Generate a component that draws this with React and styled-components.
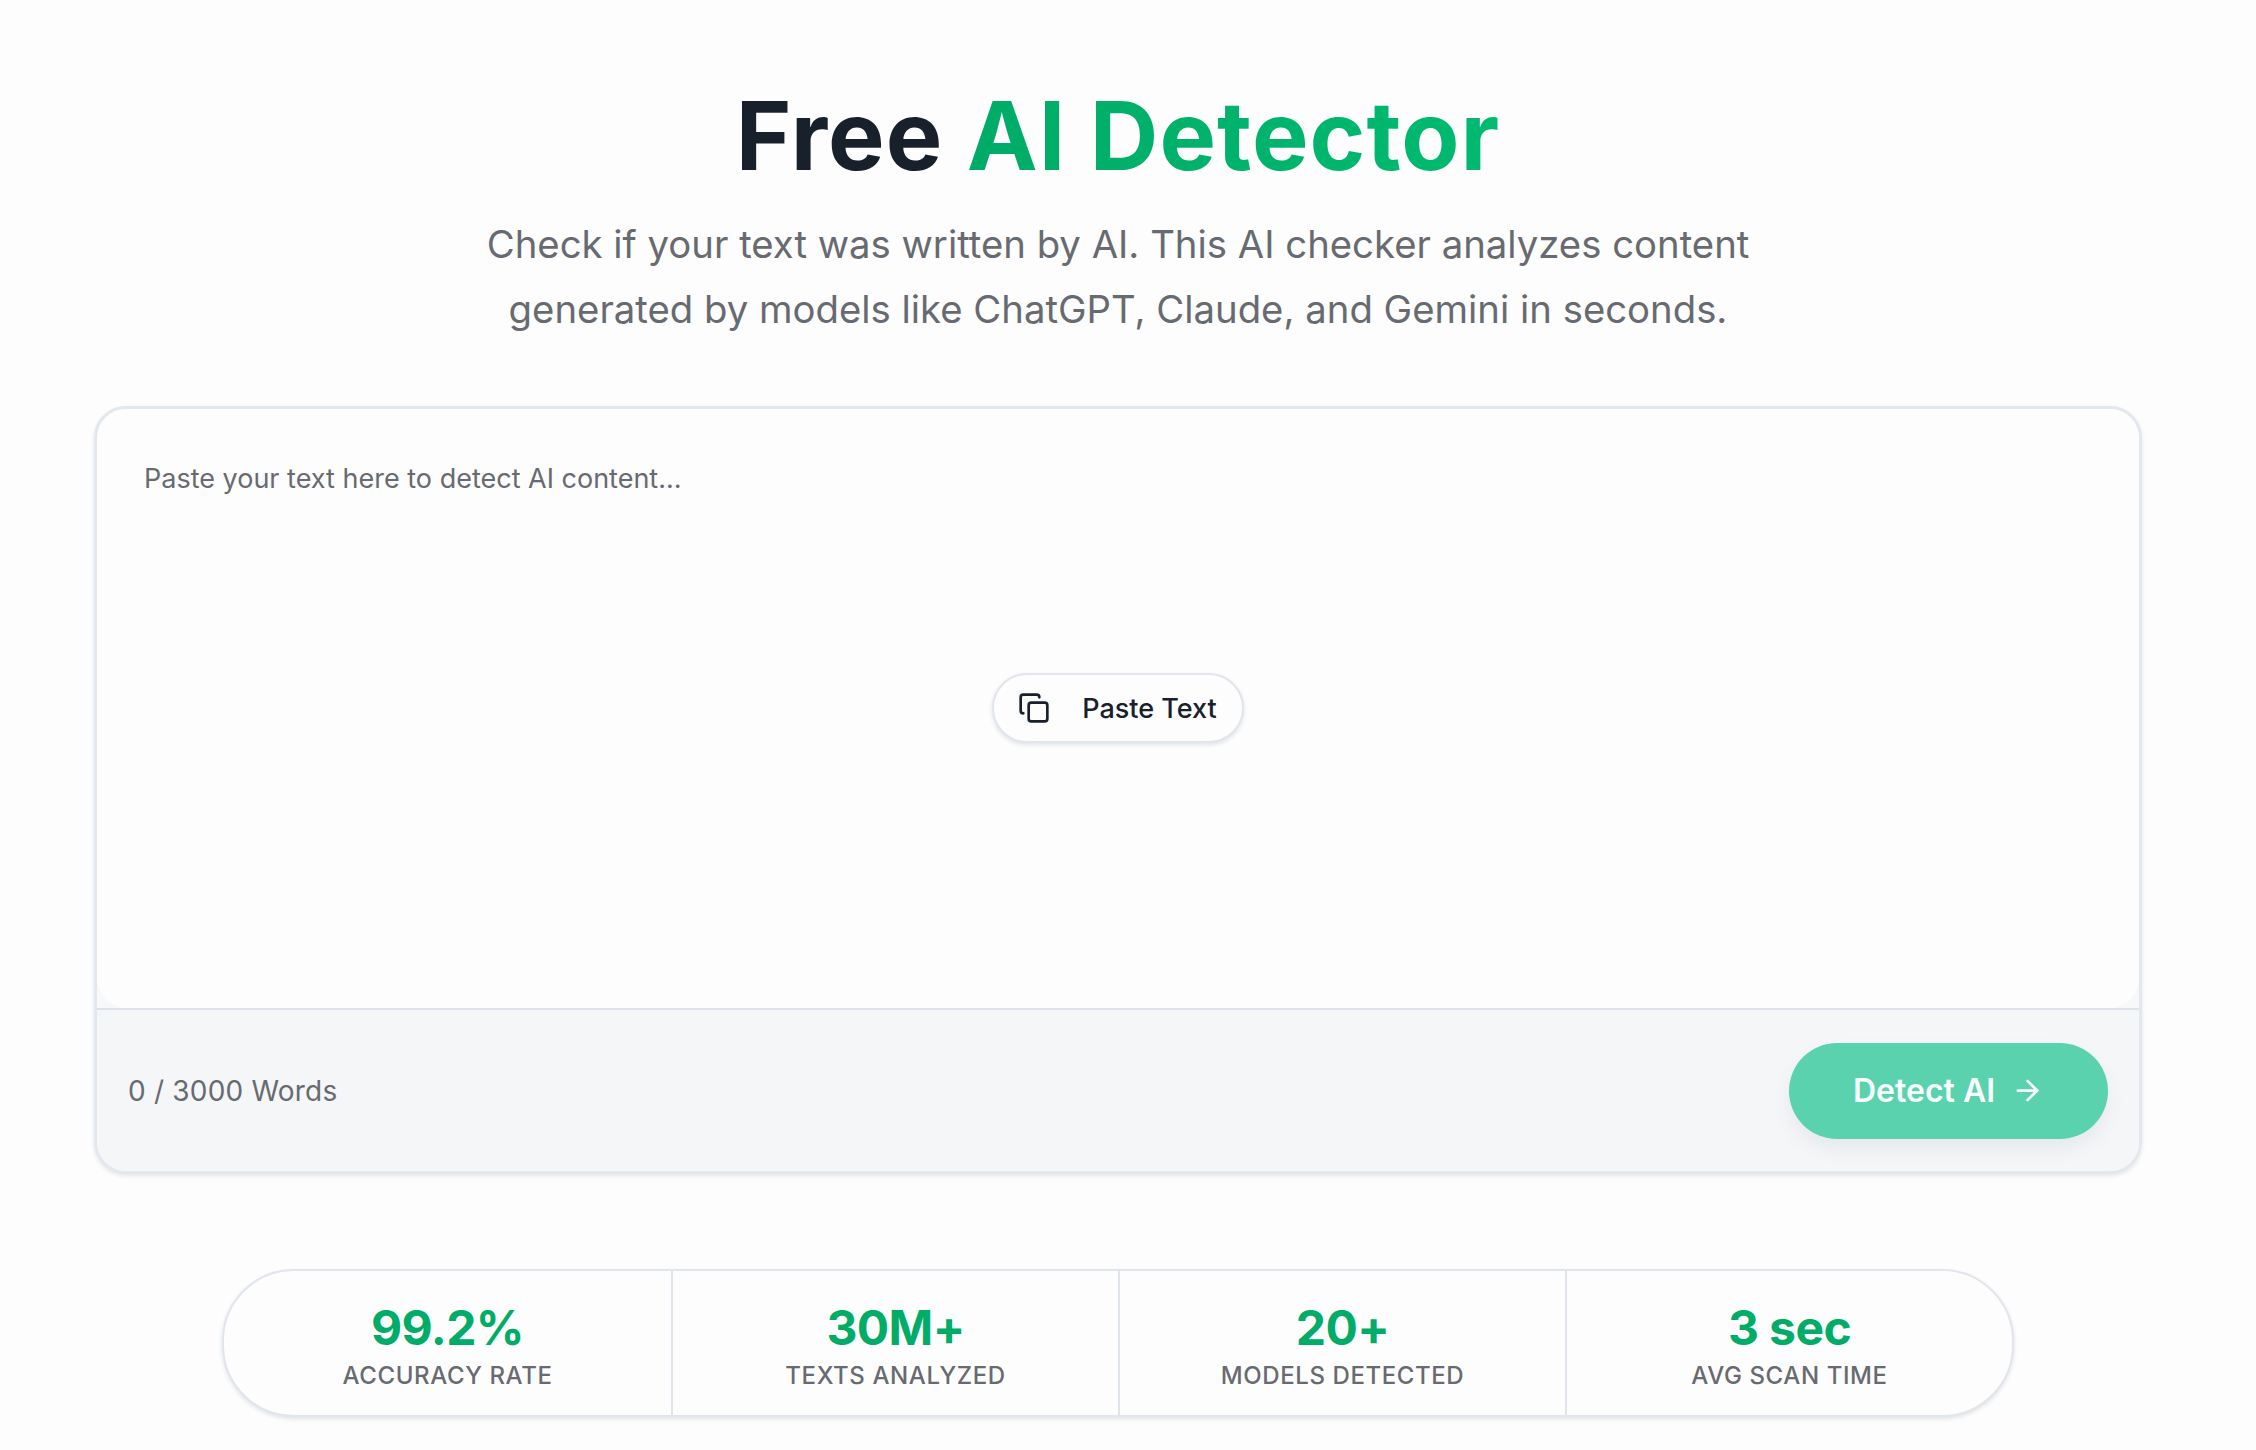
import React from 'react';
import styled, { createGlobalStyle } from 'styled-components';

const GlobalStyle = createGlobalStyle`
  html, body {
    margin: 0;
    padding: 0;
    background: #fdfdfd;
  }
  body {
    font-family: Inter, "Noto Sans", sans-serif;
    overflow: hidden;
  }
`;

const Page = styled.main`
  width: 2236px;
  height: 1450px;
  box-sizing: border-box;
  padding: 78px 94px 0;
  display: flex;
  flex-direction: column;
  align-items: center;
`;

const Title = styled.h1`
  margin: 0;
  font-size: 95px;
  line-height: 116px;
  font-weight: 700;
  letter-spacing: 1px;
  color: #18212b;
  text-align: center;
`;

const Accent = styled.span`
  color: #00b16a;
  background: linear-gradient(90deg, #00ab68, #00ba70);
  -webkit-background-clip: text;
  background-clip: text;
  -webkit-text-fill-color: transparent;
`;

const Subtitle = styled.p`
  margin: 18px 0 0;
  font-size: 38.3px;
  line-height: 65px;
  font-weight: 400;
  color: #676b71;
  text-align: center;
`;

const Card = styled.section`
  width: 100%;
  box-sizing: border-box;
  margin-top: 64px;
  border: 3px solid #e3e7ee;
  border-radius: 32px;
  background: #f7f8fa;
  box-shadow: 0 2px 4px rgba(20, 30, 50, 0.1);
  overflow: hidden;
`;

const InputArea = styled.div`
  height: 599px;
  box-sizing: border-box;
  padding: 50px 47px;
  background: #fdfdfd;
  border-radius: 0 0 30px 30px;
  display: flex;
  flex-direction: column;
  align-items: center;
`;

const Placeholder = styled.div`
  align-self: flex-start;
  font-size: 27px;
  line-height: 40px;
  color: #676b71;
`;

const PasteButton = styled.button`
  margin-top: 174px;
  height: 70px;
  box-sizing: border-box;
  padding: 0 25px 0 24px;
  display: flex;
  align-items: center;
  gap: 32px;
  font-family: inherit;
  font-size: 27px;
  font-weight: 500;
  color: #18212b;
  background: #fdfdfd;
  border: 2px solid #e1e5ec;
  border-radius: 35px;
  box-shadow: 0 2px 4px rgba(20, 30, 50, 0.12);
`;

const Footer = styled.div`
  height: 161px;
  padding: 0 31px;
  display: flex;
  align-items: center;
  justify-content: space-between;
  background: #f4f6f8;
  border-top: 2px solid #dde2ea;
`;

const WordCount = styled.span`
  font-size: 28px;
  letter-spacing: 0.2px;
  color: #676b71;
`;

const DetectButton = styled.button`
  width: 319px;
  height: 96px;
  display: flex;
  align-items: center;
  justify-content: center;
  gap: 16px;
  font-family: inherit;
  font-size: 32px;
  font-weight: 600;
  color: #f8fdfb;
  background: #5ad2ae;
  border: none;
  border-radius: 48px;
  box-shadow: 0 10px 20px rgba(20, 30, 50, 0.06);
`;

const StatsBar = styled.section`
  width: 1792px;
  box-sizing: border-box;
  margin-top: 95px;
  display: grid;
  grid-template-columns: repeat(4, 1fr);
  border: 2px solid #e1e5ec;
  border-radius: 72px;
  background: #fdfdfd;
  box-shadow: 0 2px 4px rgba(20, 30, 50, 0.12);
`;

const Stat = styled.div`
  height: 144px;
  box-sizing: border-box;
  padding-top: 6px;
  display: flex;
  flex-direction: column;
  align-items: center;
  justify-content: center;
  border-left: ${props => (props.$first ? 'none' : '2px solid #dfe4ec')};
`;

const StatValue = styled.div`
  font-size: 48px;
  line-height: 56px;
  font-weight: 700;
  letter-spacing: -0.6px;
  color: #00ac68;
`;

const StatLabel = styled.div`
  margin-top: 4px;
  font-size: 24px;
  line-height: 32px;
  font-weight: 500;
  letter-spacing: 0.6px;
  color: #676b71;
`;

const PasteIcon = () => (
  <svg width="32" height="32" viewBox="0 0 24 24" fill="none" stroke="#18212b" strokeWidth="2" strokeLinecap="round" strokeLinejoin="round">
    <rect x="8" y="8" width="14" height="14" rx="2" />
    <path d="M4 16c-1.1 0-2-.9-2-2V4c0-1.1.9-2 2-2h10c1.1 0 2 .9 2 2" />
  </svg>
);

const ArrowIcon = () => (
  <svg width="33" height="33" viewBox="0 0 24 24" fill="none" stroke="currentColor" strokeWidth="2" strokeLinecap="round" strokeLinejoin="round">
    <path d="M5 12h14" />
    <path d="m12 5 7 7-7 7" />
  </svg>
);

const stats = [
  { value: '99.2%', label: 'ACCURACY RATE' },
  { value: '30M+', label: 'TEXTS ANALYZED' },
  { value: '20+', label: 'MODELS DETECTED' },
  { value: '3 sec', label: 'AVG SCAN TIME' },
];

const App = () => (
  <Page>
    <GlobalStyle />
    <Title>
      Free <Accent>AI Detector</Accent>
    </Title>
    <Subtitle>
      Check if your text was written by AI. This AI checker analyzes content
      <br />
      generated by models like ChatGPT, Claude, and Gemini in seconds.
    </Subtitle>
    <Card>
      <InputArea>
        <Placeholder>Paste your text here to detect AI content...</Placeholder>
        <PasteButton>
          <PasteIcon />
          Paste Text
        </PasteButton>
      </InputArea>
      <Footer>
        <WordCount>0 / 3000 Words</WordCount>
        <DetectButton>
          Detect AI
          <ArrowIcon />
        </DetectButton>
      </Footer>
    </Card>
    <StatsBar>
      {stats.map((stat, i) => (
        <Stat key={stat.label} $first={i === 0}>
          <StatValue>{stat.value}</StatValue>
          <StatLabel>{stat.label}</StatLabel>
        </Stat>
      ))}
    </StatsBar>
  </Page>
);

export default App;
